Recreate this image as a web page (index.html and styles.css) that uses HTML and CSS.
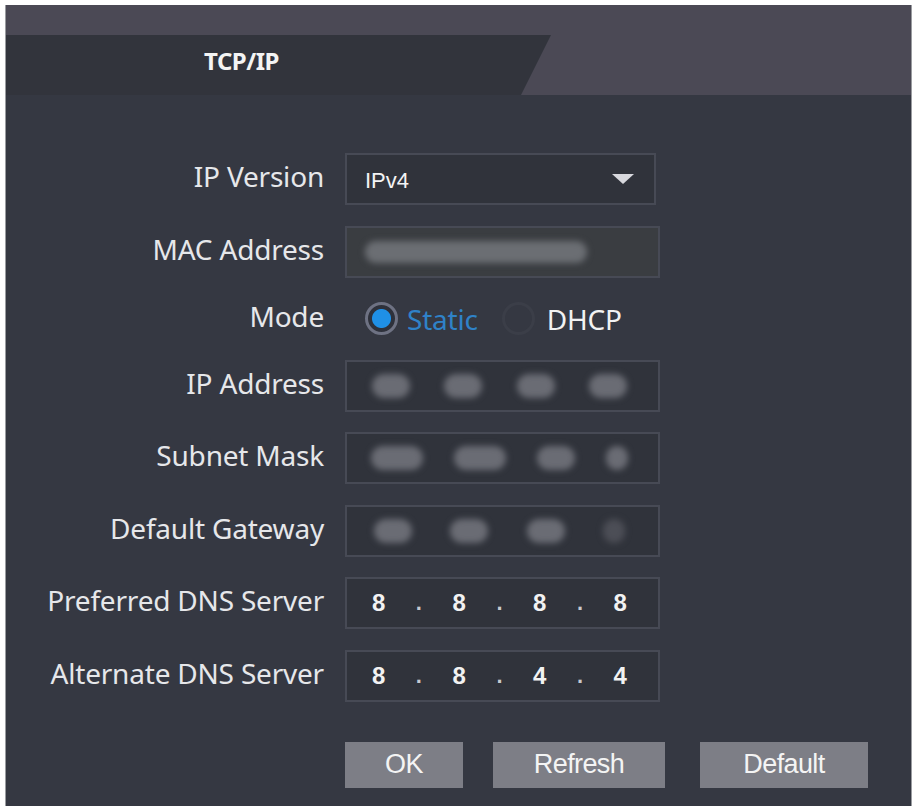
FILE: index.html
```html
<!DOCTYPE html>
<html lang="en">
<head>
    <meta charset="UTF-8">
    <title>TCP/IP</title>
    <link rel="stylesheet" href="styles.css">
</head>
<body>
    <div class="panel">
        <div class="header">
            <div class="band"></div>
            <div class="tabs">
                <div class="tab active"><span>TCP/IP</span></div>
            </div>
        </div>
        <div class="content">
            <div class="form">
                <label class="lbl">IP Version</label>
                <div class="field select">
                    <span class="val">IPv4</span>
                    <span class="caret"></span>
                </div>

                <label class="lbl">MAC Address</label>
                <div class="field readonly">
                    <span class="blob mac"></span>
                </div>

                <label class="lbl">Mode</label>
                <div class="mode">
                    <span class="radio checked"></span>
                    <span class="opt on">Static</span>
                    <span class="radio"></span>
                    <span class="opt">DHCP</span>
                </div>

                <label class="lbl">IP Address</label>
                <div class="field ip hidden">
                    <span class="blob b1"></span><span class="blob b2"></span><span class="blob b3"></span><span class="blob b4"></span>
                </div>

                <label class="lbl">Subnet Mask</label>
                <div class="field ip hidden">
                    <span class="blob b1 wide"></span><span class="blob b2 wide"></span><span class="blob b3"></span><span class="blob b4 small"></span>
                </div>

                <label class="lbl">Default Gateway</label>
                <div class="field ip hidden">
                    <span class="blob b1"></span><span class="blob b2"></span><span class="blob b3"></span><span class="blob b4 small dim"></span>
                </div>

                <label class="lbl">Preferred DNS Server</label>
                <div class="field ip">
                    <span class="oct">8</span><span class="dot">.</span><span class="oct">8</span><span class="dot">.</span><span class="oct">8</span><span class="dot">.</span><span class="oct">8</span>
                </div>

                <label class="lbl">Alternate DNS Server</label>
                <div class="field ip">
                    <span class="oct">8</span><span class="dot">.</span><span class="oct">8</span><span class="dot">.</span><span class="oct">4</span><span class="dot">.</span><span class="oct">4</span>
                </div>
            </div>
            <div class="actions">
                <button class="btn ok">OK</button>
                <button class="btn refresh">Refresh</button>
                <button class="btn default">Default</button>
            </div>
        </div>
    </div>
</body>
</html>
```

FILE: styles.css
```css
* {
    margin: 0;
    padding: 0;
    box-sizing: border-box;
}
body {
    background-color: #ffffff;
    font-family: "Noto Sans", sans-serif;
    padding: 5px 5px 0 5px;
}
.panel {
    background-color: #353842;
    height: 801px;
    border-left: 1px solid #9a9ca0;
    border-right: 1px solid #9a9ca0;
}
.header {
    background-color: #4b4955;
}
.band {
    height: 30px;
}
.tabs {
    height: 60px;
    display: flex;
}
.tab {
    width: 545px;
    background-color: #32343c;
    clip-path: polygon(0 0, 100% 0, calc(100% - 30px) 100%, 0 100%);
    display: flex;
    justify-content: center;
    padding-top: 9px;
    padding-right: 74px;
}
.tab span {
    color: #f4f4f4;
    font-weight: bold;
    font-size: 24px;
    letter-spacing: -0.5px;
}
.content {
    padding-top: 58px;
}
.form {
    display: grid;
    grid-template-columns: 318px 315px;
    column-gap: 21px;
    row-gap: 20.5px;
    align-items: center;
}
.lbl {
    text-align: right;
    color: #e6e7ea;
    font-size: 28px;
    letter-spacing: -0.2px;
    white-space: nowrap;
    margin-top: -6px;
}
.field {
    height: 52px;
    border: 2px solid #474a55;
    background-color: #30333b;
    display: flex;
    align-items: center;
}
.select {
    width: 311px;
    padding: 0 18px;
    justify-content: space-between;
}
.select .val {
    color: #f4f4f4;
    font-family: "Liberation Sans", sans-serif;
    font-size: 22px;
    padding-top: 4px;
}
.caret {
    width: 0;
    height: 0;
    border-left: 11px solid transparent;
    border-right: 11px solid transparent;
    border-top: 10px solid #d8d9de;
    margin-right: 2px;
}
.readonly {
    background-color: #3a3d41;
    padding-left: 18px;
}
.blob {
    display: inline-block;
    background-color: #6b6e73;
    border-radius: 12px;
    filter: blur(3px);
}
.mac {
    width: 222px;
    height: 22px;
}
.mode {
    height: 41px;
    display: flex;
    align-items: center;
}
.radio {
    width: 33px;
    height: 33px;
    border-radius: 50%;
    border: 3px solid #3b3e48;
}
.radio.checked {
    border-color: #6e7283;
    background: radial-gradient(circle, #1f90e6 0, #1f90e6 9px, #2e313b 10px);
    margin-left: 20px;
}
.opt {
    font-size: 28px;
    color: #f2f2f2;
    margin-left: 12px;
    letter-spacing: -0.2px;
}
.opt.on {
    color: #2f82c8;
    margin-left: 9px;
}
.opt + .radio {
    margin-left: 24px;
}
.ip {
    justify-content: space-around;
    padding: 0 14px 0 8px;
}
.hidden .blob {
    height: 24px;
    width: 38px;
    background-color: #6a6c74;
}
.hidden .blob.wide {
    width: 52px;
}
.hidden .blob.small {
    width: 22px;
}
.hidden .blob.dim {
    background-color: #4c4e56;
}
.oct {
    color: #f2f2f2;
    font-family: "Liberation Sans", sans-serif;
    font-weight: bold;
    font-size: 24px;
    width: 20px;
    text-align: center;
}
.dot {
    color: #c8c9ce;
    font-family: "Liberation Sans", sans-serif;
    font-weight: bold;
    font-size: 22px;
}
.actions {
    display: flex;
    margin-top: 40px;
    margin-left: 339px;
}
.btn {
    height: 46px;
    border: none;
    background-color: #7d7e86;
    color: #f4f4f4;
    font-family: "Liberation Sans", sans-serif;
    font-size: 27px;
    letter-spacing: -0.6px;
}
.ok {
    width: 118px;
}
.refresh {
    width: 172px;
    margin-left: 30px;
}
.default {
    width: 168px;
    margin-left: 35px;
}
```
